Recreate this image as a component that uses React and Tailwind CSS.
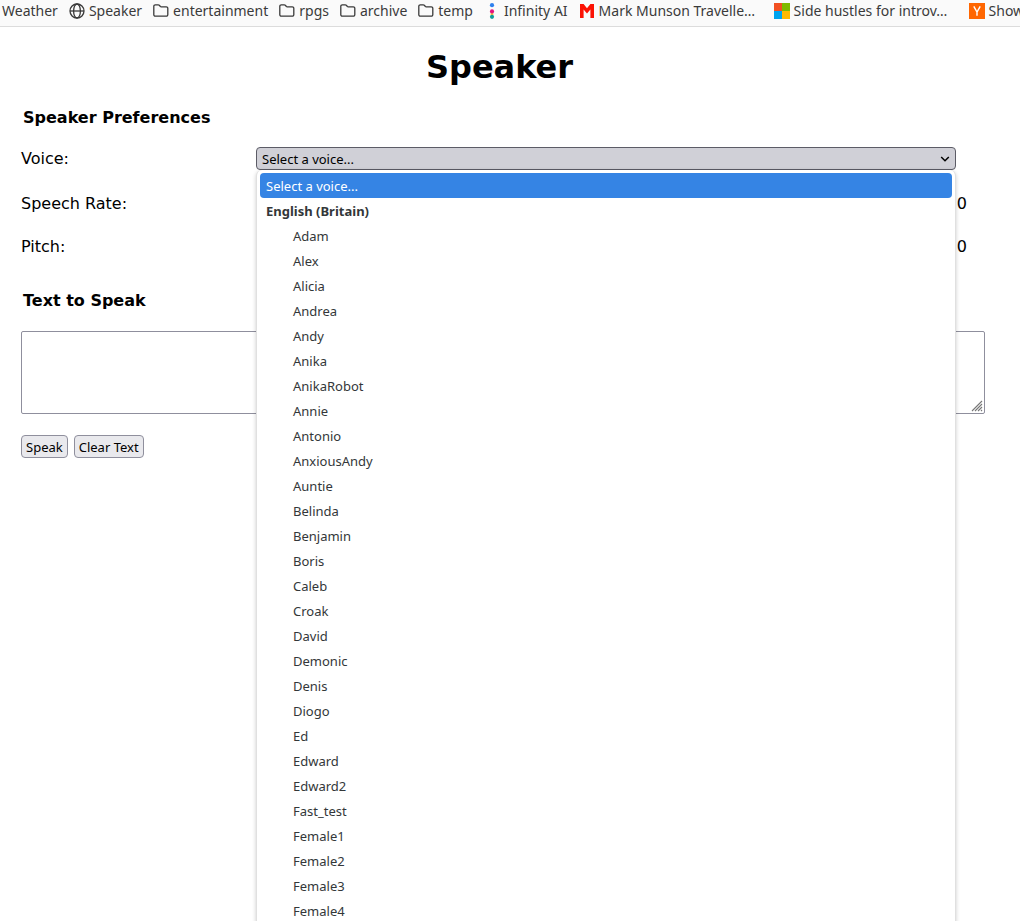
import React from "react";

const voices = [
  "Adam", "Alex", "Alicia", "Andrea", "Andy", "Anika", "AnikaRobot", "Annie", "Antonio", "AnxiousAndy",
  "Auntie", "Belinda", "Benjamin", "Boris", "Caleb", "Croak", "David", "Demonic", "Denis", "Diogo",
  "Ed", "Edward", "Edward2", "Fast_test", "Female1", "Female2", "Female3", "Female4",
];

function GlobeIcon() {
  return (
    <svg className="size-4 shrink-0" viewBox="0 0 16 16" fill="none" stroke="#3a3a3a" strokeWidth="1.3" aria-hidden="true">
      <circle cx="8" cy="8" r="7" />
      <ellipse cx="8" cy="8" rx="3.4" ry="7" />
      <path d="M1 8h14" />
    </svg>
  );
}

function FolderIcon() {
  return (
    <svg className="size-4 shrink-0" viewBox="0 0 16 16" fill="none" stroke="#3a3a3a" strokeWidth="1.3" strokeLinejoin="round" aria-hidden="true">
      <path d="M.8 3.3a1.5 1.5 0 0 1 1.5-1.5h2.9c.4 0 .8.2 1.1.5l1.1 1.2c.2.2.5.3.8.3h5.1a1.5 1.5 0 0 1 1.5 1.5v6.4a1.5 1.5 0 0 1-1.5 1.5h-11a1.5 1.5 0 0 1-1.5-1.5z" />
    </svg>
  );
}

function InfinityIcon() {
  return (
    <svg className="size-4 shrink-0" viewBox="0 0 16 16" aria-hidden="true">
      <circle cx="8" cy="10.9" r="1.5" fill="#f4b942" />
      <circle cx="8" cy="2.2" r="2.1" fill="#2f80ed" />
      <circle cx="8" cy="8.4" r="2.1" fill="#e5127d" />
      <circle cx="8" cy="13.8" r="2.1" fill="#0f9d9a" />
    </svg>
  );
}

function MarkIcon() {
  return (
    <svg className="size-4 shrink-0" viewBox="0 0 16 16" aria-hidden="true">
      <path fill="#fb1204" d="M1 1h3.6L8 5.2 11.4 1H15v14h-3.6V6.6L8 10.6 4.6 6.6V15H1z" />
    </svg>
  );
}

function SquaresIcon() {
  return (
    <svg className="size-4 shrink-0" viewBox="0 0 16 16" aria-hidden="true">
      <path fill="#f25022" d="M0 0h8v8H0z" />
      <path fill="#7fba00" d="M8 0h8v8H8z" />
      <path fill="#00a4ef" d="M0 8h8v8H0z" />
      <path fill="#ffb900" d="M8 8h8v8H8z" />
    </svg>
  );
}

function YIcon() {
  return (
    <svg className="size-4 shrink-0" viewBox="0 0 16 16" aria-hidden="true">
      <path fill="#ff6600" d="M0 0h16v16H0z" />
      <path d="M4.8 3.3 8 9l3.2-5.7M8 8.6v4.2" fill="none" stroke="#fff" strokeWidth="1.4" />
    </svg>
  );
}

const bookmarks = [
  { label: "Weather" },
  { label: "Speaker", Icon: GlobeIcon },
  { label: "entertainment", Icon: FolderIcon },
  { label: "rpgs", Icon: FolderIcon },
  { label: "archive", Icon: FolderIcon },
  { label: "temp", Icon: FolderIcon },
  { label: "Infinity AI", Icon: InfinityIcon },
  { label: "Mark Munson Travelle…", Icon: MarkIcon, long: true },
  { label: "Side hustles for introv…", Icon: SquaresIcon, long: true },
  { label: "Show", Icon: YIcon },
];

function BookmarksBar() {
  return (
    <nav aria-label="Bookmarks" className="flex h-[27px] items-start gap-[11px] overflow-hidden border-b border-[#dcdcdc] bg-[#fafafa] pl-0.5 font-['Noto_Sans',sans-serif] text-[14px] leading-[22px] text-[#3a3a3a]">
      {bookmarks.map(({ label, Icon, long }) => (
        <a key={label} href="#" className="flex shrink-0 items-center gap-1 whitespace-nowrap">
          {Icon && <Icon />}
          <span className={long ? "w-[164px]" : ""}>{label}</span>
        </a>
      ))}
    </nav>
  );
}

function VoiceMenu() {
  return (
    <div role="listbox" aria-label="Voices" className="absolute inset-x-0 top-[23px] z-10 rounded-md border-x border-[#e0e0e0] bg-white px-[3px] pt-[3px] pb-1 text-[13px] leading-[25px] text-[#333739] shadow-[0_1px_4px_rgba(0,0,0,0.2)]">
      <div role="option" aria-selected="true" className="h-[25px] rounded bg-[#3584e4] px-1.5 leading-[27px] text-white">Select a voice...</div>
      <div role="group" aria-labelledby="britain" className="pt-px">
        <div id="britain" className="px-1.5 font-bold">English (Britain)</div>
        {voices.map((v) => (
          <div key={v} role="option" aria-selected="false" className="pl-[33px]">{v}</div>
        ))}
      </div>
    </div>
  );
}

export default function App() {
  const button = "h-[23px] rounded border border-[#8f8f9d] bg-[#e9e9ed] px-1 pt-px font-['Noto_Sans',sans-serif] text-[13px] leading-5";
  return (
    <div className="h-screen overflow-hidden bg-white font-['DejaVu_Sans',sans-serif] text-base text-black">
      <BookmarksBar />
      <main className="pr-[21px]">
        <h1 className="pt-5 text-center text-[32px] leading-10 font-bold">Speaker</h1>
        <div className="pr-3.5 pl-[21px]">
          <h2 className="mt-[21px] px-0.5 leading-5 font-bold">Speaker Preferences</h2>

          <div className="mt-[19px] flex h-[23px] items-center pr-[29px]">
            <label htmlFor="voice" className="w-[235px] shrink-0">Voice:</label>
            <div className="relative h-[23px] min-w-0 flex-1 font-['Noto_Sans',sans-serif]">
              <select id="voice" className="block h-[23px] w-full appearance-none rounded border border-[#5c5c66] bg-[#d0d0d7] px-[5px] pt-px text-[13px] leading-5">
                <option>Select a voice...</option>
                <optgroup label="English (Britain)">
                  {voices.map((v) => <option key={v}>{v}</option>)}
                </optgroup>
              </select>
              <svg className="pointer-events-none absolute top-2 right-1.5 h-2 w-2.5" viewBox="0 0 10 8" fill="none" stroke="#000" strokeWidth="1.5" aria-hidden="true">
                <path d="M1.2 2 5 5.8 8.8 2" />
              </svg>
              <VoiceMenu />
            </div>
          </div>

          <div className="mt-[22px] flex h-6 items-center pr-[18px]">
            <label htmlFor="rate" className="w-[235px] shrink-0">Speech Rate:</label>
            <input id="rate" type="range" className="mr-2 min-w-0 flex-1" />
            <output htmlFor="rate">1.0</output>
          </div>
          <div className="mt-[19px] flex h-6 items-center pr-[18px]">
            <label htmlFor="pitch" className="w-[235px] shrink-0">Pitch:</label>
            <input id="pitch" type="range" className="mr-2 min-w-0 flex-1" />
            <output htmlFor="pitch">1.0</output>
          </div>

          <h2 className="mt-8 px-0.5 leading-5 font-bold"><label htmlFor="speech">Text to Speak</label></h2>
          <div className="relative mt-5">
            <textarea id="speech" className="block h-[83px] w-full resize-none rounded-xs border border-[#8f8f9d] bg-white" />
            <svg className="pointer-events-none absolute right-0.5 bottom-0.5 size-3" viewBox="0 0 12 12" fill="none" stroke="#777" strokeWidth="1.1" aria-hidden="true">
              <path d="M1 11 11 1M4 11l7-7M7 11l4-4M10 11l1-1" />
            </svg>
          </div>
          <div className="mt-[21px] flex gap-1.5">
            <button type="button" className={button}>Speak</button>
            <button type="button" className={button}>Clear Text</button>
          </div>
        </div>
      </main>
    </div>
  );
}
